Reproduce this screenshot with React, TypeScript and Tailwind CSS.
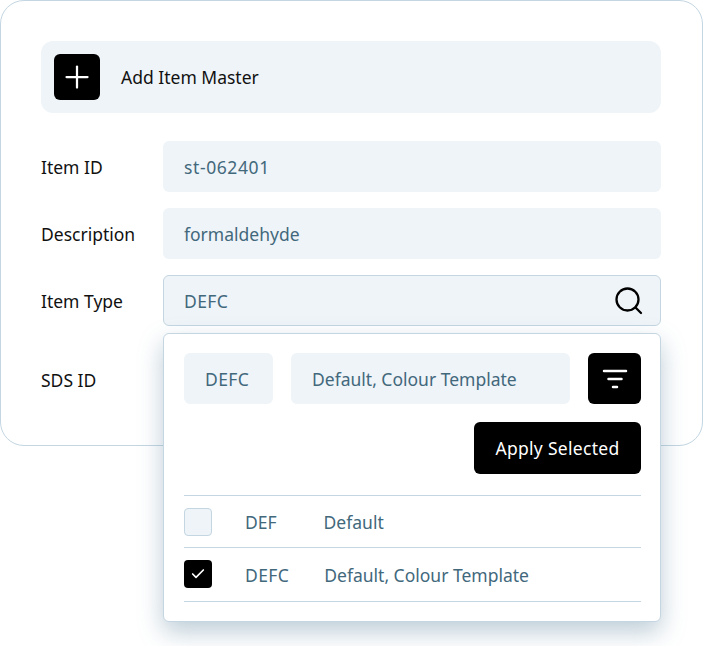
import { Check, Plus } from 'lucide-react';

const labelClass = 'w-[122px] shrink-0 pt-0.5 text-[17.5px] text-[#111]';
const fieldClass = 'flex h-[51px] flex-1 items-center rounded-md bg-[#eff4f8] px-[21px] pt-0.5 text-[17.5px] text-[#42687c]';

export default function App() {
  return (
    <div className="h-[646px] w-[703px] overflow-hidden bg-white font-['Noto_Sans',sans-serif]">
      <div className="h-[446px] w-[703px] rounded-[24px] border border-[#c3d6e2] bg-white p-10">
        {/* Header */}
        <div className="mb-[28px] flex h-[72px] w-[620px] items-center gap-[21px] rounded-xl bg-[#eff4f8] px-[13px]">
          <div className="flex h-[46px] w-[46px] items-center justify-center rounded-md bg-black">
            <Plus className="h-[36px] w-[36px] text-white" strokeWidth={1.5} />
          </div>
          <span className="text-[17.5px] text-[#111]">Add Item Master</span>
        </div>

        {/* Form */}
        <div className="flex w-[620px] flex-col gap-4">
          <div className="flex items-center">
            <div className={labelClass}>Item ID</div>
            <div className={`${fieldClass} tracking-[0.6px]`}>st-062401</div>
          </div>
          <div className="flex items-center">
            <div className={labelClass}>Description</div>
            <div className={fieldClass}>formaldehyde</div>
          </div>
          <div className="flex items-center">
            <div className={labelClass}>Item Type</div>
            <div className="relative flex-1">
              <div className="flex h-[51px] items-center justify-between rounded-md border border-[#c3d6e2] bg-[#eff4f8] pl-5 pr-[17px] text-[17.5px] text-[#42687c]">
                <span className="pt-0.5 tracking-[0.4px]">DEFC</span>
                <svg width="28" height="28" viewBox="0 0 28 28" fill="none" stroke="black" strokeWidth="2.3" strokeLinecap="round">
                  <circle cx="12.500" cy="12.500" r="11" />
                  <path d="M20.500 20.500 26 26" />
                </svg>
              </div>

              {/* Dropdown */}
              <div className="absolute left-0 right-0 top-full z-10 mt-[7px] h-[289px] rounded-md border border-[#c3d6e2] bg-white py-[19px] pl-5 pr-[19px] shadow-[0_10px_24px_rgba(90,130,155,0.4)]">
                <div className="flex gap-[18px]">
                  <div className="flex h-[51px] w-[89px] items-center rounded-md bg-[#eff4f8] pl-[21px] pt-0.5 text-[17.5px] tracking-[0.4px] text-[#42687c]">DEFC</div>
                  <div className="flex h-[51px] flex-1 items-center rounded-md bg-[#eff4f8] pl-[21px] pt-0.5 text-[17.5px] text-[#42687c]">Default, Colour Template</div>
                  <div className="flex h-[51px] w-[53px] items-center justify-center rounded-md bg-black">
                    <svg width="26" height="20" viewBox="0 0 26 20" fill="none" stroke="white" strokeWidth="2.5" strokeLinecap="round">
                      <path d="M2 2h22M6.500 10h13M11 18h4" />
                    </svg>
                  </div>
                </div>
                <div className="mt-[18px] flex justify-end">
                  <div className="flex h-[52px] w-[167px] items-center justify-center rounded-md bg-black text-[17.5px] tracking-[0.3px] text-white">Apply Selected</div>
                </div>
                <div className="mt-[21px] border-y border-[#c3d6e2]">
                  <div className="flex h-[51px] items-center text-[17.5px] text-[#42687c]">
                    <div className="h-7 w-7 rounded border border-[#c3d6e2] bg-[#eff4f8]" />
                    <span className="ml-[33px] pt-px">DEF</span>
                    <span className="ml-[47px] pt-px">Default</span>
                  </div>
                  <div className="flex h-[54px] items-center border-t border-[#c3d6e2] text-[17.5px] text-[#42687c]">
                    <div className="mb-0.5 flex h-7 w-7 items-center justify-center rounded bg-black">
                      <Check className="h-4 w-4 text-white" strokeWidth={2.5} />
                    </div>
                    <span className="ml-[33px] pt-0.5 tracking-[0.4px]">DEFC</span>
                    <span className="ml-[35px] pt-0.5">Default, Colour Template</span>
                  </div>
                </div>
              </div>
            </div>
          </div>
          <div className="mt-3 flex h-[51px] items-center">
            <div className={labelClass}>SDS ID</div>
          </div>
        </div>
      </div>
    </div>
  );
}
